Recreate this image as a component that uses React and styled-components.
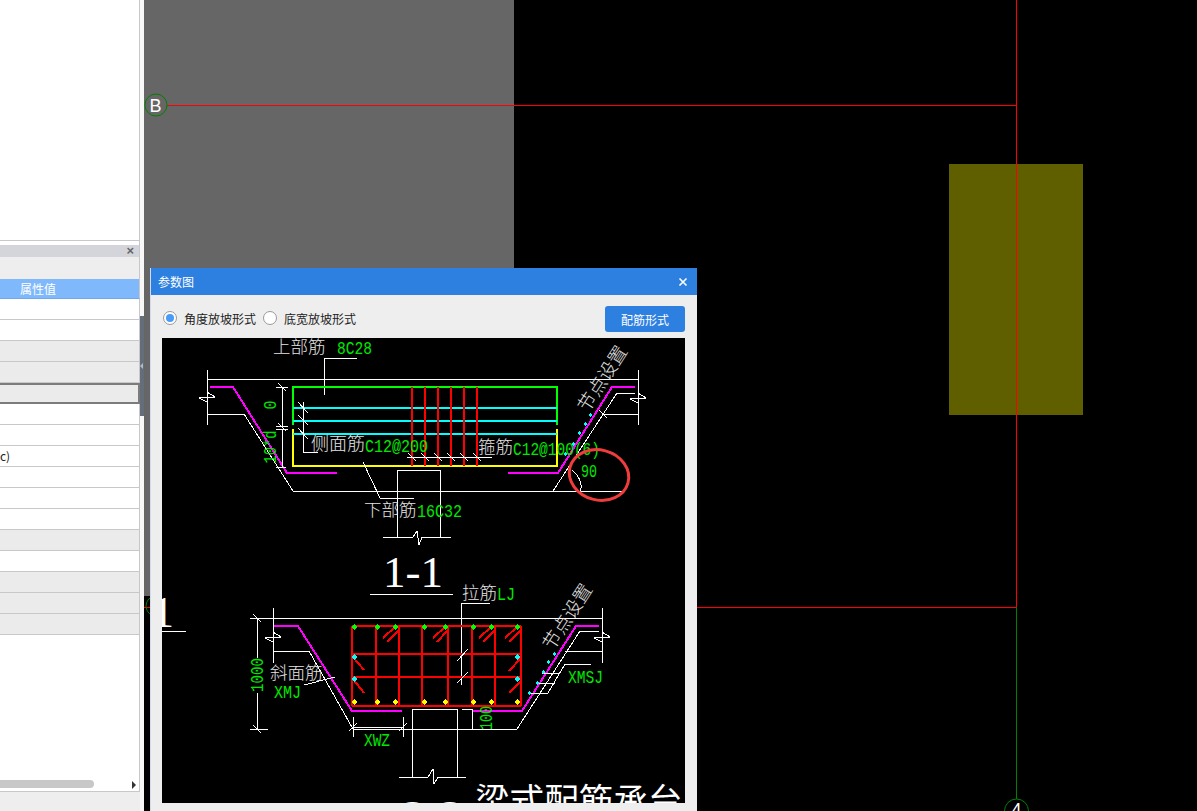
import React from 'react'
import styled, { createGlobalStyle } from 'styled-components'

const GlobalStyle = createGlobalStyle`
    html, body {
        margin: 0;
        padding: 0;
        background: #000;
    }
    * {
        box-sizing: border-box;
    }
`

const Page = styled.div`
    display: flex;
    width: 1197px;
    height: 811px;
    overflow: hidden;
    position: relative;
    font-family: "Noto Sans CJK SC", "Liberation Sans", sans-serif;
    font-size: 12px;
`

// left property panel
const Sidebar = styled.aside`
    position: relative;
    flex: 0 0 144px;
    display: flex;
    flex-direction: column;
    padding-right: 4px;
    background: #f8f8f8;
`
const TopPane = styled.div`
    flex: 0 0 241px;
    background: #fff;
    border-right: 1px solid #c8c8cc;
    border-bottom: 1px solid #c8c8cc;
`
const Spacer = styled.div`
    flex: 0 0 4px;
    background: #fff;
    border-right: 1px solid #c8c8cc;
`
const PaneHeader = styled.div`
    flex: 0 0 12px;
    min-height: 0;
    overflow: hidden;
    display: flex;
    justify-content: flex-end;
    align-items: center;
    padding-right: 5px;
    background: #d4d5da;
    border-right: 1px solid #c8c8cc;
    color: #666;
    font: bold 13px/12px "Liberation Sans", sans-serif;
`
const PaneTools = styled.div`
    flex: 0 0 22px;
    background: #eee;
    border-right: 1px solid #c8c8cc;
`
const PropHeader = styled.div`
    flex: 0 0 20px;
    min-height: 0;
    overflow: hidden;
    padding-left: 20px;
    line-height: 19px;
    color: #fff;
    background: #7fb9fb;
    border-right: 1px solid #c8c8cc;
    border-bottom: 1px solid #6fa9ec;
`
const PropRow = styled.div`
    flex: 0 0 21px;
    min-height: 0;
    line-height: 20px;
    color: #222;
    font-size: 12px;
    white-space: nowrap;
    overflow: hidden;
    background: ${p => (p.$kind === 'w' ? '#fff' : '#ebebeb')};
    border-right: 1px solid #c8c8cc;
    border-bottom: 1px solid #c8c8cc;
    ${p => p.$kind === 's' && 'border: 2px solid #7c7c7c; border-left: 0; line-height: 18px;'}
`
const PaneRest = styled.div`
    flex: 0 0 157px;
    position: relative;
    background: #fff;
    border-right: 1px solid #c8c8cc;
    border-bottom: 1px solid #c8c8cc;
`
const ScrollThumb = styled.div`
    position: absolute;
    left: 0;
    bottom: 3px;
    width: 94px;
    height: 8px;
    background: #c8c8c8;
    border-radius: 0 4px 4px 0;
`
const ScrollArrow = styled.div`
    position: absolute;
    left: 132px;
    bottom: 2px;
    border-left: 4px solid #333;
    border-top: 4px solid transparent;
    border-bottom: 4px solid transparent;
`
const PaneFoot = styled.div`
    flex: 1;
    background: #eee;
`
const SplitHandle = styled.div`
    position: absolute;
    left: 140px;
    top: 316px;
    width: 4px;
    height: 100px;
    background: #646e7a;
    display: flex;
    align-items: center;
    &::after {
        content: '';
        border-right: 3px solid #b4bac2;
        border-top: 3px solid transparent;
        border-bottom: 3px solid transparent;
    }
`

// cad view behind the dialog
const CadView = styled.main`
    position: relative;
    flex: 1;
    background: #000;
`
const CadSvg = styled.svg`
    display: block;
`
const AxisLetter = styled.text`
    font-family: "Liberation Sans", sans-serif;
    font-size: 18px;
    fill: #fff;
`

// floating dialog
const Dialog = styled.section`
    position: absolute;
    left: 6px;
    top: 268px;
    width: 547px;
    height: 543px;
    background: #eee;
    border-left: 1px solid #d3daee;
`
const TitleBar = styled.header`
    height: 27px;
    display: flex;
    align-items: center;
    justify-content: space-between;
    padding: 0 9px 0 7px;
    background: #2d7fe0;
    color: #fff;
`
const CloseIcon = styled.svg`
    width: 10px;
    height: 10px;
`
const DialogTools = styled.div`
    height: 43px;
    display: flex;
    align-items: center;
    padding: 5px 12px 0 12px;
`
const RadioLabel = styled.label`
    display: flex;
    align-items: center;
    gap: 7px;
    margin: 0 7px 2px 0;
    color: #222;
`
const RadioMark = styled.span`
    width: 14px;
    height: 14px;
    border-radius: 50%;
    background: #fff;
    border: 1px solid #9a9a9a;
    display: flex;
    align-items: center;
    justify-content: center;
    &::after {
        content: '';
        width: 8px;
        height: 8px;
        border-radius: 50%;
        background: ${p => (p.$on ? '#4a9bf5' : 'transparent')};
    }
`
const FormButton = styled.button`
    margin-left: auto;
    width: 80px;
    height: 26px;
    border: 0;
    border-radius: 3px;
    background: #2d7fe0;
    color: #fff;
    font: inherit;
`
const Figure = styled.div`
    width: 523px;
    height: 465px;
    margin-left: 11px;
    background: #000;
`
const FigureSvg = styled.svg`
    display: block;
    overflow: hidden;
`

// drawing primitives, coordinates are page coordinates
const Wire = styled.path`
    fill: none;
    stroke: ${p => p.$c || '#fff'};
    stroke-width: ${p => p.$w || 1};
    shape-rendering: crispEdges;
`
const Ring = styled.ellipse`
    fill: none;
    stroke: #f03c3c;
    stroke-width: 3;
`
const CjkLabel = styled.text`
    font-family: "Noto Sans CJK SC", sans-serif;
    font-weight: 300;
    font-size: ${p => p.$s || 17.5}px;
    fill: #e4e4e4;
`
const CodeLabel = styled.text.attrs({ lengthAdjust: 'spacingAndGlyphs' })`
    font-family: "Liberation Mono", monospace;
    font-size: ${p => p.$s || 19}px;
    fill: #00e800;
`
const BigLabel = styled.text`
    font-family: "Liberation Serif", serif;
    font-size: 45px;
    fill: #fff;
`
const TitleLabel = styled.text`
    font-family: "Noto Sans CJK SC", sans-serif;
    font-size: 34.6px;
    fill: #fff;
`
const Dot = styled.path`
    fill: ${p => p.$c};
    shape-rendering: crispEdges;
`

const rows = ['w', 'w', 'g', 'g', 's', 'w', 'w', 'w', 'w', 'w', 'w', 'g', 'w', 'g', 'g', 'g']

const stirrupX = [412, 425, 438, 451, 464, 477]
const gridX = [352, 376, 399, 422, 448, 472, 495, 521]
const barX = [354, 377, 395, 424, 445, 473, 491, 517]
const hooks = [
    [383, 638, 395, 627], [387, 642, 399, 630],
    [433, 638, 445, 627], [437, 642, 448, 630],
    [479, 638, 491, 627], [483, 642, 495, 630],
    [505, 638, 517, 627], [509, 642, 521, 630],
    [353, 657, 364, 670], [353, 679, 364, 693],
    [521, 658, 509, 671], [521, 681, 509, 693],
]
const upperDots = [[590, 415], [585, 424], [579, 433], [573, 444], [565, 454]]
const lowerDots = [[554, 654], [548, 662], [543, 672], [537, 683], [529, 693]]

const diamond = (x, y, r = 3) => `M${x} ${y - r}L${x + r} ${y}L${x} ${y + r}L${x - r} ${y}Z`
const tick = (x, y, r = 4) => `M${x - r} ${y - r}L${x + r} ${y + r}`
const breakMark = (x, y) => `M${x} ${y}L${x + 8} ${y + 5}L${x - 8} ${y + 6}L${x} ${y + 10}`

function UpperSection() {
    return (
        <g>
            <CjkLabel x="273" y="353">上部筋</CjkLabel>
            <CodeLabel x="337" y="354" textLength="35">8C28</CodeLabel>
            <Wire d="M357 358H324V395" />
            <Wire d="M207 379H638M207 370V425M207 414H244" />
            <Wire d="M638 370V425M602 414H638" />
            <Wire d={breakMark(207, 392)} />
            <Wire d={breakMark(638, 393)} />
            <Wire d="M244 414L293 491H623M553 491L617 393H635" />
            <Wire d="M572 470A22 22 0 0 1 581 491" />
            <Wire $c="#ff00ff" $w="2" d="M210 387H233L287 473H337M508 473H558L612 387H635" />
            <Wire $c="#00ff00" $w="2" d="M293 425V387H557V425" />
            <Wire $c="#ffff00" $w="2" d="M293 429V466H557V429" />
            <Wire $c="#00ffff" $w="2" d="M293 408H557M293 421H557M293 434H557" />
            {stirrupX.map(x => (
                <Wire key={x} $c="#ff0000" $w="2" d={`M${x} 387V466`} />
            ))}
            <Wire d="M282 387V426M282 430V467M276 387H288M276 426H288M276 429H288M276 467H286" />
            <Wire d={`${tick(282, 387)}${tick(282, 427)}`} />
            <Wire d="M303 402V452H318" />
            <Wire d="M298 402L308 413M298 415L308 425M298 428L308 439" />
            <Wire d="M407 457H492" />
            {stirrupX.map(x => (
                <Wire key={x} d={tick(x, 457)} />
            ))}
            <Wire d={tick(603, 414)} />
            <CodeLabel transform="rotate(-90 276 405)" x="276" y="405" textAnchor="middle" textLength="9">0</CodeLabel>
            <CodeLabel transform="rotate(-90 276 447)" x="276" y="447" textAnchor="middle" textLength="33">10*d</CodeLabel>
            <CjkLabel x="311" y="450" $s="18">侧面筋</CjkLabel>
            <CodeLabel x="365" y="452" textLength="63">C12@200</CodeLabel>
            <CjkLabel x="478" y="453">箍筋</CjkLabel>
            <CodeLabel x="513" y="455" textLength="87">C12@100(6)</CodeLabel>
            <Wire d="M363 462L380 498H414" />
            <Wire d="M397 537V470H440V537M383 537H413M422 537H451" />
            <Wire d="M413 537L417 531L419 545L422 537" />
            <CjkLabel x="364" y="516">下部筋</CjkLabel>
            <CodeLabel x="417" y="517" textLength="45">16C32</CodeLabel>
            {upperDots.map(([x, y]) => (
                <Dot key={x} $c="#00ffff" d={diamond(x, y, 2)} />
            ))}
            <CjkLabel transform="rotate(-57 603 379)" x="603" y="385" textAnchor="middle" $s="18.5">节点设置</CjkLabel>
            <CodeLabel x="581" y="477" textLength="16">90</CodeLabel>
            <Ring cx="599" cy="475" rx="30" ry="25" transform="rotate(15 599 475)" />
            <BigLabel x="383" y="587">1-1</BigLabel>
            <Wire d="M370 594H453" />
            <BigLabel x="174" y="627" textAnchor="end">1-1</BigLabel>
            <Wire d="M162 631H186" />
        </g>
    )
}

function LowerSection() {
    return (
        <g>
            <CjkLabel x="462" y="599">拉筋</CjkLabel>
            <CodeLabel x="497" y="600" textLength="18">LJ</CodeLabel>
            <Wire d="M490 603H461V685" />
            <Wire d="M250 618H602M250 729H268M257 618V658M257 693V729" />
            <Wire d={`${tick(257, 618)}${tick(257, 729)}`} />
            <Wire d="M273 608V663M273 651H309M602 608V663M565 651H602" />
            <Wire d={breakMark(273, 632)} />
            <Wire d={breakMark(602, 632)} />
            <Wire d="M309 651L353 729H517L580 631H599" />
            <Wire $c="#ff00ff" $w="2" d="M274 626H298L352 711H402M472 711H522L576 626H599" />
            {gridX.map(x => (
                <Wire key={x} $c="#ff0000" $w="2" d={`M${x} 626V706`} />
            ))}
            <Wire $c="#ff0000" $w="2" d="M352 626H521M352 654H521M352 677H521M352 706H521" />
            {hooks.map(([a, b, c, d]) => (
                <Wire key={`${a}-${b}`} $c="#ff0000" $w="2" d={`M${a} ${b}L${c} ${d}`} />
            ))}
            {barX.map(x => (
                <Dot key={x} $c="#00ff00" d={diamond(x, 627)} />
            ))}
            {barX.map(x => (
                <Dot key={x} $c="#ffff00" d={diamond(x, 702)} />
            ))}
            {[[354, 657], [354, 679], [517, 657], [517, 679]].map(([x, y]) => (
                <Dot key={`${x}-${y}`} $c="#00ffff" d={diamond(x, y)} />
            ))}
            <Wire d="M457 661L468 649M457 683L468 672" />
            <Wire d="M412 777V709H457V777M399 777H428M438 777H466" />
            <Wire d="M428 777L433 769L434 784L438 777" />
            <Wire d="M353 727H403M353 717V737M403 717V737" />
            <Wire d="M349 731L357 723M399 731L407 723" />
            <CodeLabel x="364" y="746" textLength="26">XWZ</CodeLabel>
            <CodeLabel transform="rotate(-90 263 675)" x="263" y="675" textAnchor="middle" textLength="34">1000</CodeLabel>
            <CjkLabel x="270" y="679">斜面筋</CjkLabel>
            <CodeLabel x="274" y="698" textLength="27">XMJ</CodeLabel>
            <Wire d="M304 685L335 677" />
            <CodeLabel x="568" y="683" textLength="35">XMSJ</CodeLabel>
            <Wire d="M565 664H591M529 693H548M537 683H555M542 673H560" />
            <Wire d="M565 664L548 693" />
            {lowerDots.map(([x, y]) => (
                <Dot key={x} $c="#00ffff" d={diamond(x, y, 2)} />
            ))}
            <CjkLabel transform="rotate(-57 568 617)" x="568" y="623" textAnchor="middle" $s="18.5">节点设置</CjkLabel>
            <CodeLabel transform="rotate(-90 492 718)" x="492" y="718" textAnchor="middle" textLength="24">100</CodeLabel>
            <Wire d="M462 709H472M472 709V729" />
            <BigLabel x="403" y="831">2-2</BigLabel>
            <TitleLabel x="475" y="813">梁式配筋承台</TitleLabel>
        </g>
    )
}

export default function App() {
    return (
        <Page>
            <GlobalStyle />
            <Sidebar>
                <TopPane />
                <Spacer />
                <PaneHeader>×</PaneHeader>
                <PaneTools />
                <PropHeader>属性值</PropHeader>
                {rows.map((kind, i) => (
                    <PropRow key={i} $kind={kind}>{i === 7 ? 'c)' : ''}</PropRow>
                ))}
                <PaneRest>
                    <ScrollThumb />
                    <ScrollArrow />
                </PaneRest>
                <PaneFoot />
            </Sidebar>
            <SplitHandle />
            <CadView>
                <CadSvg width="1053" height="811" viewBox="144 0 1053 811">
                    <rect x="144" y="0" width="370" height="596" fill="#666" />
                    <rect x="949" y="164" width="134" height="251" fill="#5f5f00" />
                    <Wire $c="#ff0000" d="M167 105.5H1017M144 607.5H1017" />
                    <Wire $c="#ff0000" d="M1016.5 0V607" />
                    <Wire $c="#008000" d="M1016.5 607V799" />
                    <circle cx="156" cy="105" r="11" fill="none" stroke="#008000" />
                    <AxisLetter x="155.5" y="112" textAnchor="middle">B</AxisLetter>
                    <circle cx="156" cy="606" r="10" fill="none" stroke="#008000" />
                    <circle cx="1016.5" cy="811" r="12" fill="none" stroke="#008000" />
                    <AxisLetter x="1016.5" y="816" textAnchor="middle">4</AxisLetter>
                </CadSvg>
                <Dialog>
                    <TitleBar>
                        参数图
                        <CloseIcon viewBox="0 0 10 10">
                            <path d="M1.5 1.5L8.5 8.5M8.5 1.5L1.5 8.5" stroke="#fff" strokeWidth="1.6" />
                        </CloseIcon>
                    </TitleBar>
                    <DialogTools>
                        <RadioLabel><RadioMark $on />角度放坡形式</RadioLabel>
                        <RadioLabel><RadioMark />底宽放坡形式</RadioLabel>
                        <FormButton>配筋形式</FormButton>
                    </DialogTools>
                    <Figure>
                        <FigureSvg width="523" height="465" viewBox="162 338 523 465">
                            <UpperSection />
                            <LowerSection />
                        </FigureSvg>
                    </Figure>
                </Dialog>
            </CadView>
        </Page>
    )
}
